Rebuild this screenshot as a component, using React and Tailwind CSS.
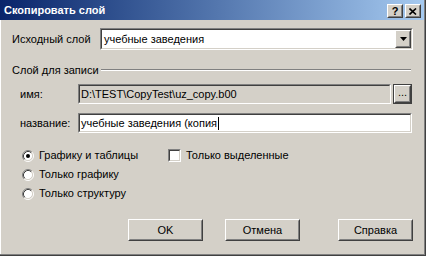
import React from "react";

function Sunken({ className = "", inner = "", children }) {
  return (
    <div className={`border-t border-l border-b border-r border-t-[#808080] border-l-[#808080] border-b-white border-r-white ${className}`}>
      <div className={`h-full border-t border-l border-b border-r border-t-[#404040] border-l-[#404040] border-b-[#d4d0c8] border-r-[#d4d0c8] ${inner}`}>
        {children}
      </div>
    </div>
  );
}

function Raised({ className = "", inner = "", children }) {
  return (
    <div className={`border-t border-l border-b border-r border-t-white border-l-white border-b-[#404040] border-r-[#404040] ${className}`}>
      <div className={`h-full border-t border-l border-b border-r border-t-[#d4d0c8] border-l-[#d4d0c8] border-b-[#808080] border-r-[#808080] flex items-center justify-center ${inner}`}>
        {children}
      </div>
    </div>
  );
}

function Radio({ checked }) {
  return (
    <svg width="12" height="12" viewBox="0 0 12 12" className="shrink-0">
      <circle cx="6" cy="6" r="4.5" fill="#ffffff" />
      <path d="M2.11 9.89 A5.5 5.5 0 0 1 9.89 2.11" fill="none" stroke="#808080" strokeWidth="1" />
      <path d="M9.89 2.11 A5.5 5.5 0 0 1 2.11 9.89" fill="none" stroke="#ffffff" strokeWidth="1" />
      <path d="M2.82 9.18 A4.5 4.5 0 0 1 9.18 2.82" fill="none" stroke="#404040" strokeWidth="1" />
      <path d="M9.18 2.82 A4.5 4.5 0 0 1 2.82 9.18" fill="none" stroke="#d4d0c8" strokeWidth="1" />
      {checked && <circle cx="6" cy="6" r="2" fill="#000000" />}
    </svg>
  );
}

function Checkbox() {
  return (
    <Sunken className="w-[13px] h-[13px] shrink-0" inner="bg-white" />
  );
}

export default function App() {
  return (
    <div className="w-[426px] h-[256px] border-r border-b border-r-[#404040] border-b-[#404040] font-['Liberation_Sans',Arial,sans-serif] text-[11px] text-black select-none">
      <div className="h-full border-r border-b border-r-[#808080] border-b-[#808080] bg-[#d4d0c8] flex flex-col">
        {/* Title bar */}
        <div className="h-[20px] flex items-center justify-between bg-gradient-to-r from-[#0a246a] to-[#a6caf0] pl-[4px] pr-[3px]">
          <span className="text-white font-bold text-[11px] leading-none">Скопировать слой</span>
          <div className="flex items-center gap-[2px] mt-[2px]">
            <Raised className="w-[16px] h-[14px]" inner="bg-[#d4d0c8]">
              <span className="font-bold text-[11px] leading-none text-black">?</span>
            </Raised>
            <Raised className="w-[16px] h-[14px]" inner="bg-[#d4d0c8]">
              <svg width="8" height="7" viewBox="0 0 8 7">
                <path d="M0.5 0.5 L7 6.5 M7 0.5 L0.5 6.5" stroke="#000" strokeWidth="1.6" />
              </svg>
            </Raised>
          </div>
        </div>

        {/* Body */}
        <div className="flex-1 border-l border-l-white pl-[11px] flex flex-col">
          {/* Source layer row */}
          <div className="mt-[8px] h-[22px] flex items-center">
            <span className="w-[88px]">Исходный слой</span>
            <Sunken className="w-[313px] h-[22px]" inner="bg-white flex items-center">
              <span className="flex-1 pl-[2px]">учебные заведения</span>
              <Raised className="w-[16px] h-[18px]" inner="bg-[#d4d0c8]">
                <svg width="7" height="4" viewBox="0 0 7 4">
                  <path d="M0 0 H7 L3.5 4 Z" fill="#000" />
                </svg>
              </Raised>
            </Sunken>
          </div>

          {/* Group header */}
          <div className="mt-[12px] h-[16px] w-[399px] flex items-center">
            <span>Слой для записи</span>
            <div className="flex-1 ml-[2px] h-[2px] border-t border-b border-t-[#808080] border-b-white" />
          </div>

          {/* Name row */}
          <div className="mt-[6px] h-[20px] flex items-center pl-[8px]">
            <span className="w-[58px]">имя:</span>
            <Sunken className="w-[313px] h-[20px]" inner="bg-[#d4d0c8] flex items-center">
              <span className="pl-[1px]">{"D:\\TEST\\CopyTest\\uz_copy.b00"}</span>
            </Sunken>
            <div className="ml-[2px] w-[19px] h-[20px] border border-[#404040]">
              <Raised className="w-full h-full" inner="bg-[#d4d0c8]">
                <span className="leading-none -mt-[3px]">...</span>
              </Raised>
            </div>
          </div>

          {/* Title row */}
          <div className="mt-[9px] h-[20px] flex items-center pl-[8px]">
            <span className="w-[58px]">название:</span>
            <Sunken className="w-[334px] h-[20px]" inner="bg-white flex items-center">
              <span className="pl-[1px]">учебные заведения (копия</span>
              <span className="w-[1px] h-[13px] bg-black ml-[1px]" />
            </Sunken>
          </div>

          {/* Options */}
          <div className="mt-[13px] flex flex-col pl-[10px]">
            <div className="h-[19px] flex items-center">
              <div className="w-[146px] flex items-center gap-[5px]">
                <Radio checked />
                <span>Графику и таблицы</span>
              </div>
              <div className="flex items-center gap-[5px]">
                <Checkbox />
                <span>Только выделенные</span>
              </div>
            </div>
            <div className="h-[19px] flex items-center gap-[5px]">
              <Radio />
              <span>Только графику</span>
            </div>
            <div className="h-[19px] flex items-center gap-[5px]">
              <Radio />
              <span>Только структуру</span>
            </div>
          </div>

          {/* Buttons */}
          <div className="mt-[16px] flex items-center pl-[116px]">
            <Raised className="w-[75px] h-[22px]" inner="bg-[#d4d0c8]">OK</Raised>
            <Raised className="ml-[22px] w-[75px] h-[22px]" inner="bg-[#d4d0c8]">Отмена</Raised>
            <Raised className="ml-[38px] w-[75px] h-[22px]" inner="bg-[#d4d0c8]">Справка</Raised>
          </div>
        </div>
      </div>
    </div>
  );
}
